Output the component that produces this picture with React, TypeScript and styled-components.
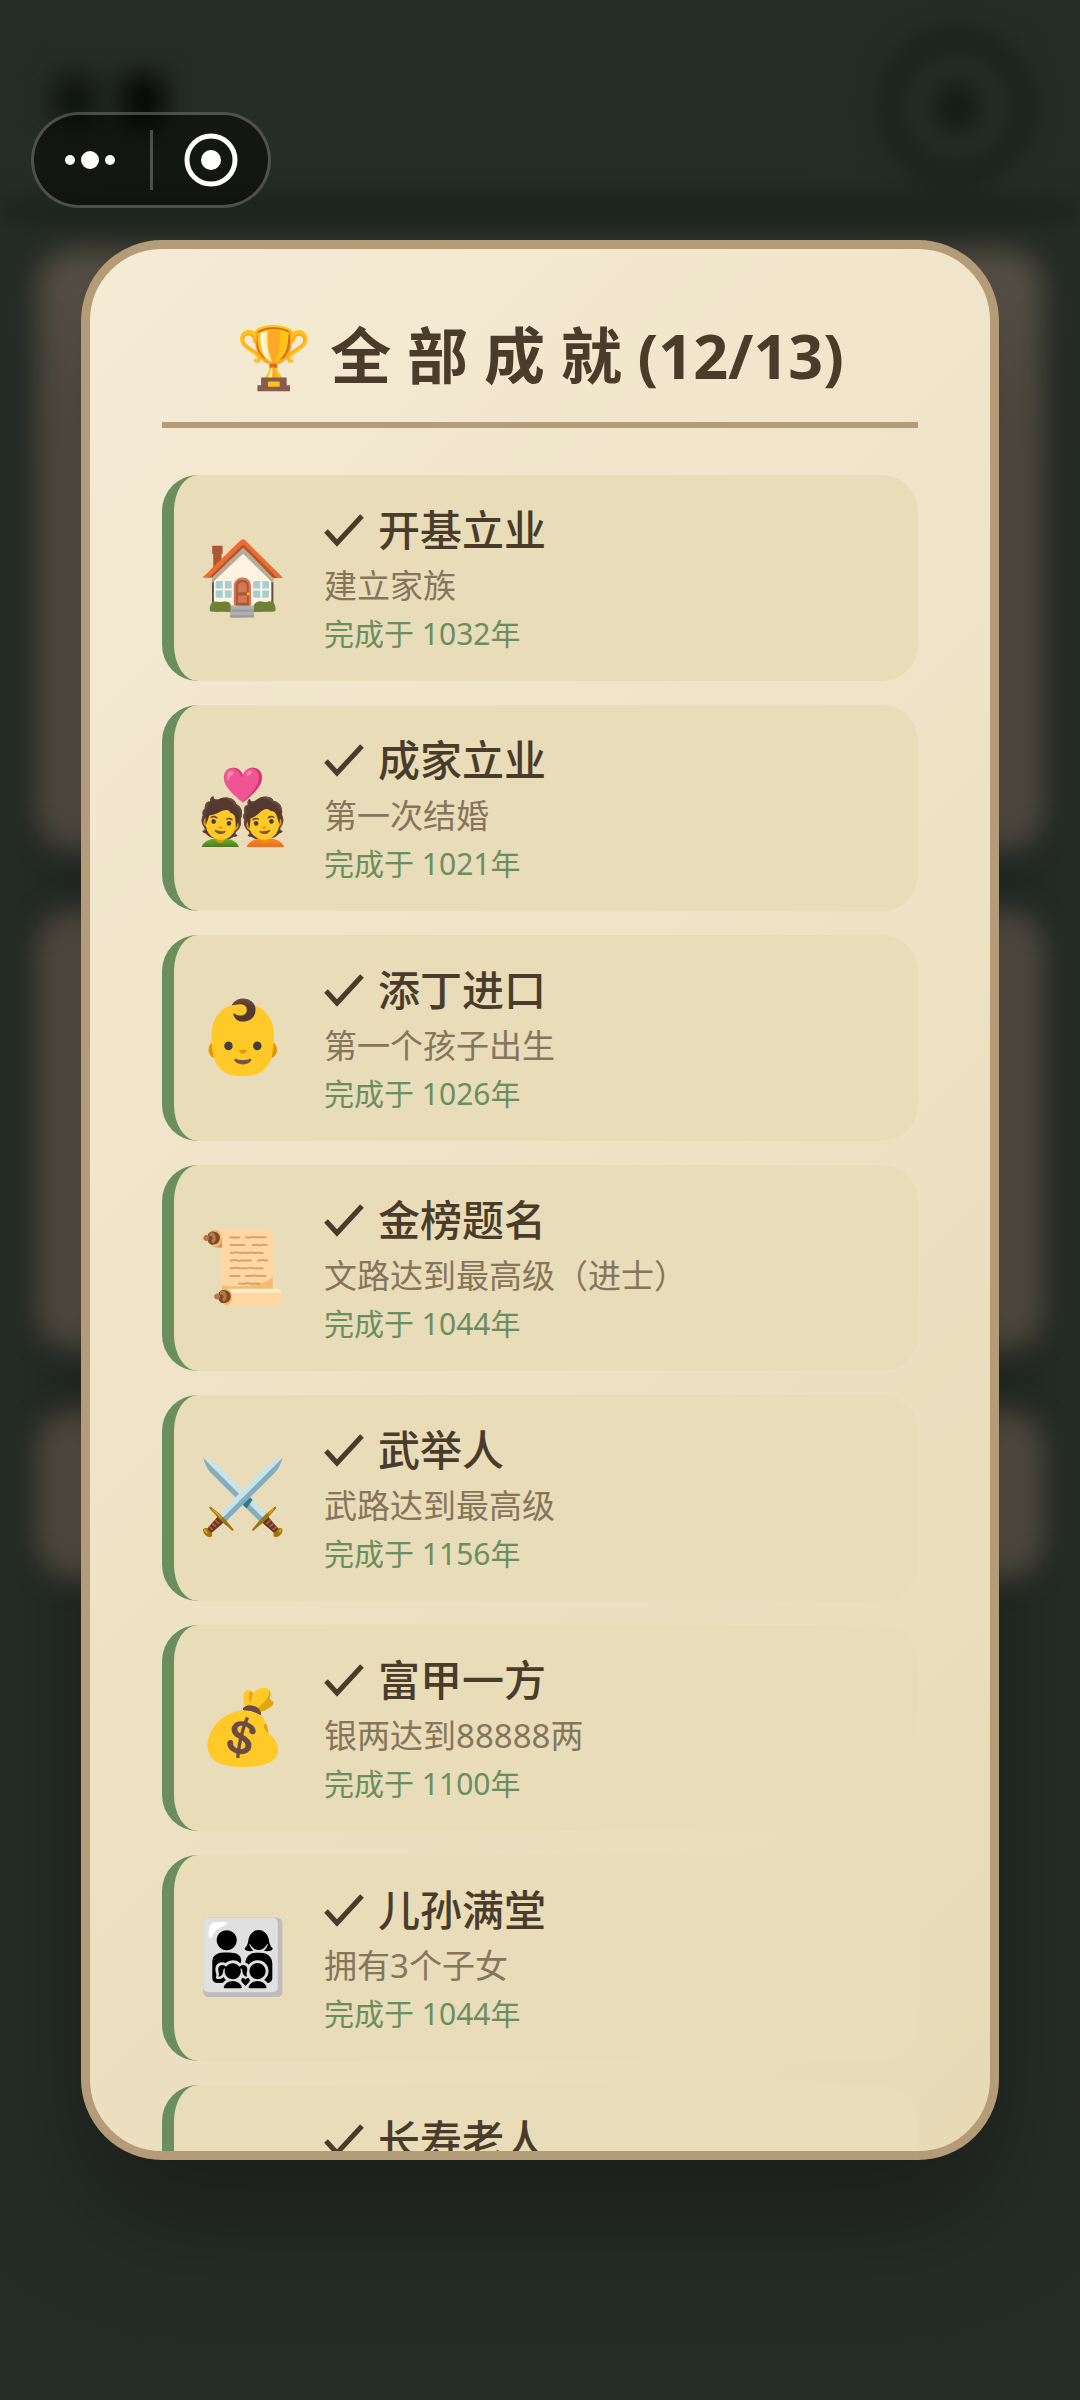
import React from 'react';
import styled, { createGlobalStyle } from 'styled-components';

const Global = createGlobalStyle`
  *, *::before, *::after { box-sizing: border-box; }
  body { margin: 0; background: #262c26; font-family: "Noto Sans", "Noto Sans CJK SC", sans-serif; }
`;

const Screen = styled.div`
  position: relative;
  min-height: 100vh;
  overflow: hidden;
  background: #262c26;
  display: flex;
  align-items: center;
  justify-content: center;
`;

/* The dimmed, out-of-focus page behind the dialog. */
const Backdrop = styled.div`
  position: absolute;
  inset: 0;
  filter: blur(14px);
  display: flex;
  flex-direction: column;
`;

const BackHeader = styled.div`
  height: 218px;
  border-bottom: 16px solid #181d17;
  padding: 32px 48px 0 54px;
  display: flex;
  justify-content: space-between;
`;

const BackTitle = styled.div`
  display: flex;
  gap: 26px;
  padding-top: 44px;
`;

const BackGlyph = styled.span<{ $tone: string }>`
  width: 42px;
  height: 48px;
  background: ${(p) => p.$tone};
`;

const BackClose = styled.div`
  width: 150px;
  height: 150px;
  border: 14px solid #131a14;
  border-radius: 50%;
  display: grid;
  place-items: center;
`;

const BackCross = styled.span`
  width: 34px;
  height: 40px;
  background: #0f1410;
`;

const BackPanels = styled.div`
  padding: 32px 38px;
  display: flex;
  flex-direction: column;
  gap: 60px;
`;

const BackPanel = styled.div<{ $h: number }>`
  height: ${(p) => p.$h}px;
  border-radius: 36px;
  background: #575045;
`;

const Capsule = styled.nav`
  position: absolute;
  z-index: 2;
  top: 112px;
  left: 31px;
  width: 240px;
  height: 96px;
  border: 3px solid rgba(255, 255, 255, 0.25);
  border-radius: 48px;
  background: rgba(0, 0, 0, 0.48);
  display: grid;
  grid-template-columns: 1fr 3px 1fr;
  align-items: center;
`;

const CapsuleButton = styled.button`
  height: 90px;
  padding: 0;
  border: 0;
  background: none;
  display: grid;
  place-items: center;
`;

const Divider = styled.span`
  height: 60px;
  background: rgba(255, 255, 255, 0.25);
`;

const Dialog = styled.section`
  position: relative;
  width: 85%;
  height: 80vh;
  overflow-y: auto;
  scrollbar-width: none;
  padding: 72px;
  border: 9px solid #b49c78;
  border-radius: 81px;
  background: linear-gradient(135deg, #f5ebd5 0%, #e7dab5 100%);
  box-shadow: 0 60px 120px rgba(0, 0, 0, 0.3);
`;

const Title = styled.h1`
  margin: 0 0 47px;
  padding-bottom: 31px;
  border-bottom: 6px solid #b49c78;
  display: flex;
  justify-content: center;
  align-items: center;
  gap: 18px;
  font-size: 61px;
  line-height: 70px;
  font-weight: 700;
  color: #4a3c2a;
  white-space: nowrap;
`;

const List = styled.ul`
  margin: 0;
  padding: 0;
  list-style: none;
  display: flex;
  flex-direction: column;
  gap: 24px;
`;

const Card = styled.li`
  min-height: 206px;
  display: flex;
  align-items: center;
  gap: 36px;
  padding: 24px;
  border-left: 12px solid #6b8e5f;
  border-radius: 36px;
  background: #e8dcb9;
`;

const Emblem = styled.span`
  flex: none;
  width: 90px;
  padding-bottom: 8px;
  display: flex;
  justify-content: center;
  font-size: 72px;
  line-height: 90px;
`;

const Info = styled.div`
  align-self: flex-start;
`;

const Name = styled.h2`
  margin: 0;
  display: flex;
  align-items: center;
  gap: 14px;
  font-size: 42px;
  line-height: 62px;
  font-weight: 500;
  color: #4a3c2a;
`;

const Desc = styled.p`
  margin: 0;
  font-size: 33px;
  line-height: 50px;
  color: #85755a;
`;

const Done = styled.p`
  margin: 0;
  font-size: 30px;
  line-height: 46px;
  color: #6b8e5f;
`;

const Check = () => (
  <svg width="40" height="40" viewBox="0 0 40 40" role="img" aria-label="✓">
    <path d="M2 21 L13 33 L38 6" fill="none" stroke="#4a3c2a" strokeWidth="5" />
  </svg>
);

type Achievement = { icon: string; name: string; desc?: string; year?: number };

const items: Achievement[] = [
  { icon: '🏠', name: '开基立业', desc: '建立家族', year: 1032 },
  { icon: '💑', name: '成家立业', desc: '第一次结婚', year: 1021 },
  { icon: '👶', name: '添丁进口', desc: '第一个孩子出生', year: 1026 },
  { icon: '📜', name: '金榜题名', desc: '文路达到最高级（进士）', year: 1044 },
  { icon: '⚔️', name: '武举人', desc: '武路达到最高级', year: 1156 },
  { icon: '💰', name: '富甲一方', desc: '银两达到88888两', year: 1100 },
  { icon: '👨‍👩‍👧‍👦', name: '儿孙满堂', desc: '拥有3个子女', year: 1044 },
  { icon: '👴', name: '长寿老人' },
];

export default function App() {
  return (
    <Screen>
      <Global />
      <Backdrop aria-hidden="true">
        <BackHeader>
          <BackTitle>
            <BackGlyph $tone="#0e120e" />
            <BackGlyph $tone="#040504" />
          </BackTitle>
          <BackClose><BackCross /></BackClose>
        </BackHeader>
        <BackPanels>
          <BackPanel $h={600} />
          <BackPanel $h={440} />
          <BackPanel $h={168} />
        </BackPanels>
      </Backdrop>
      <Capsule>
        <CapsuleButton aria-label="更多">
          <svg width="54" height="20" viewBox="0 0 54 20" fill="#fff">
            <circle cx="5" cy="10" r="5" />
            <circle cx="25" cy="10" r="9" />
            <circle cx="45" cy="10" r="5" />
          </svg>
        </CapsuleButton>
        <Divider />
        <CapsuleButton aria-label="关闭">
          <svg width="56" height="54" viewBox="0 0 56 54">
            <circle cx="29" cy="27" r="24" fill="none" stroke="#fff" strokeWidth="5" />
            <circle cx="29" cy="27" r="10" fill="#fff" />
          </svg>
        </CapsuleButton>
      </Capsule>
      <Dialog role="dialog" aria-labelledby="achievements-title">
        <Title id="achievements-title">
          <span>🏆</span>
          <span>全 部 成 就 (12/13)</span>
        </Title>
        <List>
          {items.map((item) => (
            <Card key={item.name}>
              <Emblem>{item.icon}</Emblem>
              <Info>
                <Name><Check />{item.name}</Name>
                {item.desc && <Desc>{item.desc}</Desc>}
                {item.year && <Done>完成于 {item.year}年</Done>}
              </Info>
            </Card>
          ))}
        </List>
      </Dialog>
    </Screen>
  );
}
